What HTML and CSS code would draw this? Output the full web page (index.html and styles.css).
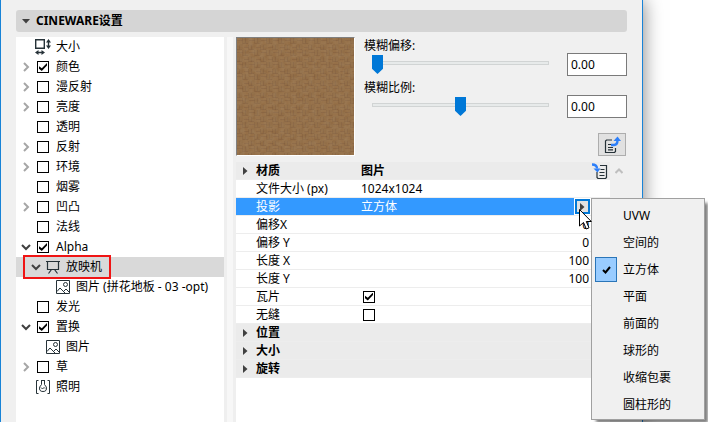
FILE: index.html
```
<!DOCTYPE html>
<html lang="zh-CN">
<head>
    <meta charset="UTF-8">
    <meta name="viewport" content="width=device-width, initial-scale=1.0">
    <title>CINEWARE设置</title>
    <link rel="stylesheet" href="styles.css">
</head>
<body>
    <!-- shared icons -->
    <svg class="defs" width="0" height="0">
        <symbol id="right" viewBox="0 0 8 10"><path d="M2 1 6 5 2 9" fill="none" stroke="#a6a6a6" stroke-width="2"/></symbol>
        <symbol id="down" viewBox="0 0 10 8"><path d="M1 2 5 6 9 2" fill="none" stroke="#404040" stroke-width="2"/></symbol>
        <symbol id="triangle" viewBox="0 0 5 8"><path d="M0 0 4.5 4 0 8Z" fill="#404040"/></symbol>
        <symbol id="picture" viewBox="0 0 14 14">
            <path d="M.5.5h13v13H.5zM1 11.500 4 8l5 5M7.500 11.500 10 9l3 3" fill="none" stroke="#263238"/>
            <circle cx="9.5" cy="4.5" r="2" fill="none" stroke="#263238"/>
        </symbol>
    </svg>

    <main class="dialog">
        <button class="title"><svg width="8" height="5" viewBox="0 0 8 5"><path d="M0 0h8L4 4.5Z" fill="#404040"/></svg>CINEWARE设置</button>

        <div class="panels">
            <ul class="tree">
                <li class="row"><span class="toggle"></span>
                    <svg class="icon size" width="16" height="16" viewBox="0 0 16 16">
                        <path d="M.7.7h8.600v8.600H.7z" fill="none" stroke="#263238" stroke-width="1.400"/>
                        <path d="M13.500 2v6M2 13.500h6" stroke="#263238" stroke-width="1.400"/>
                        <path d="M13.500 0 16 3.500h-5zM13.500 10 16 6.500h-5zM0 13.500 3.500 11v5zM10 13.500 6.500 11v5z" fill="#263238"/>
                    </svg>
                    大小</li>
                <li class="row"><button class="toggle" aria-label="展开"><svg width="8" height="10"><use href="#right"/></svg></button><label><input type="checkbox" checked>颜色</label></li>
                <li class="row"><button class="toggle" aria-label="展开"><svg width="8" height="10"><use href="#right"/></svg></button><label><input type="checkbox">漫反射</label></li>
                <li class="row"><button class="toggle" aria-label="展开"><svg width="8" height="10"><use href="#right"/></svg></button><label><input type="checkbox">亮度</label></li>
                <li class="row"><span class="toggle"></span><label><input type="checkbox">透明</label></li>
                <li class="row"><button class="toggle" aria-label="展开"><svg width="8" height="10"><use href="#right"/></svg></button><label><input type="checkbox">反射</label></li>
                <li class="row"><button class="toggle" aria-label="展开"><svg width="8" height="10"><use href="#right"/></svg></button><label><input type="checkbox">环境</label></li>
                <li class="row"><span class="toggle"></span><label><input type="checkbox">烟雾</label></li>
                <li class="row"><button class="toggle" aria-label="展开"><svg width="8" height="10"><use href="#right"/></svg></button><label><input type="checkbox">凹凸</label></li>
                <li class="row"><span class="toggle"></span><label><input type="checkbox">法线</label></li>
                <li class="row"><button class="toggle" aria-label="折叠"><svg width="10" height="8"><use href="#down"/></svg></button><label><input type="checkbox" checked>Alpha</label></li>
                <li class="row level-1 selected"><button class="toggle" aria-label="折叠"><svg width="10" height="8"><use href="#down"/></svg></button>
                    <svg class="icon" width="14" height="14" viewBox="0 0 14 14"><path d="M0 1.500h14M1.500 1.500v8h11v-8M5.500 9.500 2.500 13.500M8.500 9.500l3 4" fill="none" stroke="#263238" stroke-width="1.200"/></svg>
                    放映机
                    <span class="highlight"></span></li>
                <li class="row level-2"><span class="toggle"></span><svg class="icon" width="14" height="14"><use href="#picture"/></svg>图片 (拼花地板 - 03 -opt)</li>
                <li class="row"><span class="toggle"></span><label><input type="checkbox">发光</label></li>
                <li class="row"><button class="toggle" aria-label="折叠"><svg width="10" height="8"><use href="#down"/></svg></button><label><input type="checkbox" checked>置换</label></li>
                <li class="row level-1"><span class="toggle"></span><svg class="icon" width="14" height="14"><use href="#picture"/></svg>图片</li>
                <li class="row"><button class="toggle" aria-label="展开"><svg width="8" height="10"><use href="#right"/></svg></button><label><input type="checkbox">草</label></li>
                <li class="row"><span class="toggle"></span>
                    <svg class="icon" width="14" height="14" viewBox="0 0 14 14">
                        <path d="M2.500.5h-2v13h2M11.500.5h2v13h-2M5 .5h4M5.500.5v4L3.700 7q-1 4.500 3.300 4.500T10.300 7L8.500 4.500v-4M5 7.500 6.500 9 8 7.500l1 1" fill="none" stroke="#263238"/>
                    </svg>
                    照明</li>
            </ul>

            <div class="splitter"></div>

            <section class="details">
                <div class="top">
                    <svg class="preview" viewBox="0 0 117 117" preserveAspectRatio="xMidYMid slice">
                        <defs>
                            <pattern id="weave" width="12" height="12" patternUnits="userSpaceOnUse">
                                <path d="M0 0h12v12H0z" fill="#956f47"/>
                                <path d="M6 0h6v6H6zM0 6h6v6H0z" fill="#916c45"/>
                                <path d="M0 2.500h6M7 9.500h5M8.500 0v5M2.500 7v5" stroke="#846140" opacity=".6"/>
                                <path d="M5.500 0v6M11.500 7v5M6 5.500h5M0 11.500h5" stroke="#7d5b3a" opacity=".45"/>
                            </pattern>
                            <filter id="grain" x="0" y="0" width="100%" height="100%">
                                <feTurbulence type="fractalNoise" baseFrequency=".25" numOctaves="2" seed="4"/>
                                <feColorMatrix values="0 0 0 0 .4  0 0 0 0 .29  0 0 0 0 .17  1 0 0 0 -.25"/>
                            </filter>
                        </defs>
                        <rect width="117" height="117" fill="url(#weave)"/>
                        <rect width="117" height="117" filter="url(#grain)" opacity=".5"/>
                    </svg>
                    <div class="controls">
                        <div class="control">
                            <div class="slider">
                                <label for="blurOffset">模糊偏移:</label>
                                <input type="range" id="blurOffset" min="0" max="100" value="0">
                            </div>
                            <input type="text" value="0.00" aria-label="模糊偏移">
                        </div>
                        <div class="control">
                            <div class="slider">
                                <label for="blurScale">模糊比例:</label>
                                <input type="range" id="blurScale" min="-100" max="100" value="0">
                            </div>
                            <input type="text" value="0.00" aria-label="模糊比例">
                        </div>
                        <button class="export" aria-label="导出">
                            <svg width="17" height="17" viewBox="0 0 17 17">
                                <path d="M8 4H2.500L1.500 5v11.500h9l1-1V12M4 8.500h3.500M4 11.500h5M4 13.800h5" fill="none" stroke="#263238" stroke-width="1.200"/>
                                <path d="M7 9h3q3.500 0 3.500-5" fill="none" stroke="#2d7ff9" stroke-width="2.400"/>
                                <path d="M9.500 5 13.500.5 17 5z" fill="#2d7ff9"/>
                            </svg>
                        </button>
                    </div>
                </div>

                <div class="list">
                    <table>
                        <colgroup><col class="col-arrow"><col class="col-name"><col><col class="col-action"></colgroup>
                        <tr class="group">
                            <td><svg width="5" height="8"><use href="#triangle"/></svg></td>
                            <th>材质</th>
                            <th>图片</th>
                            <td><button class="import" aria-label="导入">
                                <svg width="16" height="16" viewBox="0 0 16 16">
                                    <path d="M8 2.500h6.500v12l-1 1H6l-1-1V9M8.500 6.500h4M7.500 9.500h5M7.500 12.500h5" fill="none" stroke="#263238" stroke-width="1.200"/>
                                    <path d="M0 1.500q5 0 5 4" fill="none" stroke="#2d7ff9" stroke-width="2.400"/>
                                    <path d="M1.500 5.500h7L5.500 9.500z" fill="#2d7ff9"/>
                                </svg>
                            </button></td>
                        </tr>
                        <tr><td></td><td>文件大小 (px)</td><td colspan="2">1024x1024</td></tr>
                        <tr class="active"><td></td><td>投影</td><td>立方体</td>
                            <td class="action">
                                <div class="dropdown">
                                    <button class="open" aria-label="投影"><svg width="5" height="8"><use href="#triangle"/></svg></button>
                                    <ul class="menu">
                                        <li><button><span class="mark"></span>UVW</button></li>
                                        <li><button><span class="mark"></span>空间的</button></li>
                                        <li><button><span class="mark checked"><svg width="9" height="8" viewBox="0 0 9 8"><path d="M1 4 3.500 6.500 8 1" fill="none" stroke="#000" stroke-width="2"/></svg></span>立方体</button></li>
                                        <li><button><span class="mark"></span>平面</button></li>
                                        <li><button><span class="mark"></span>前面的</button></li>
                                        <li><button><span class="mark"></span>球形的</button></li>
                                        <li><button><span class="mark"></span>收缩包裹</button></li>
                                        <li><button><span class="mark"></span>圆柱形的</button></li>
                                    </ul>
                                    <svg class="pointer" width="13" height="21" viewBox="0 0 13 21"><path d="M.5.5v16.500l4-3.500 2.800 6.500 2.700-1.200-2.700-6.300h5z" fill="#fff" stroke="#000"/></svg>
                                </div>
                            </td>
                        </tr>
                        <tr><td></td><td>偏移X</td><td class="number" colspan="2">0</td></tr>
                        <tr><td></td><td>偏移 Y</td><td class="number" colspan="2">0</td></tr>
                        <tr><td></td><td>长度 X</td><td class="number" colspan="2">100</td></tr>
                        <tr><td></td><td>长度 Y</td><td class="number" colspan="2">100</td></tr>
                        <tr><td></td><td><label for="tile">瓦片</label></td><td class="check" colspan="2"><input type="checkbox" id="tile" checked></td></tr>
                        <tr><td></td><td><label for="seamless">无缝</label></td><td class="check" colspan="2"><input type="checkbox" id="seamless"></td></tr>
                        <tr class="group"><td><svg width="5" height="8"><use href="#triangle"/></svg></td><th colspan="3">位置</th></tr>
                        <tr class="group"><td><svg width="5" height="8"><use href="#triangle"/></svg></td><th colspan="3">大小</th></tr>
                        <tr class="group"><td><svg width="5" height="8"><use href="#triangle"/></svg></td><th colspan="3">旋转</th></tr>
                    </table>
                    <div class="scrollbar">
                        <button aria-label="向上滚动"><svg width="8" height="6" viewBox="0 0 8 6"><path d="M.5 5 4 1.500 7.500 5" fill="none" stroke="#bfbfbf" stroke-width="2"/></svg></button>
                    </div>
                </div>
            </section>
        </div>
    </main>
</body>
</html>
```
FILE: styles.css
```
* {
    box-sizing: border-box;
}
body {
    margin: 0;
    background: #fff;
    color: #000;
    font-family: "Noto Sans", "Noto Sans CJK SC", sans-serif;
    font-size: 12px;
    line-height: 16px;
    overflow: hidden;
}
button, input {
    font: inherit;
    color: inherit;
    margin: 0;
}
button {
    padding: 0;
    border: none;
    background: none;
}
svg {
    display: block;
    flex: none;
}
ul {
    list-style: none;
    margin: 0;
    padding: 0;
}
.defs {
    position: absolute;
}
.dialog {
    display: flex;
    flex-direction: column;
    height: 100vh;
    margin-right: 65px;
    padding: 10px 15px 0;
    border: solid #1883d7;
    border-width: 0 1px;
    background: #f0f0f0;
    box-shadow: 0 0 18px rgba(0, 0, 0, 0.5);
}
.title {
    display: flex;
    align-items: center;
    gap: 6px;
    height: 22px;
    padding: 0 6px;
    border-radius: 3px;
    background: #d5d5d5;
    font-weight: bold;
}
.panels {
    display: flex;
    flex: 1;
    min-height: 0;
    margin-top: 5px;
}

/* channel tree */
.tree {
    width: 208px;
    background: #fff;
    white-space: nowrap;
}
.row {
    display: flex;
    align-items: center;
    position: relative;
    height: 20px;
    padding-left: 5px;
}
.row label {
    display: flex;
    align-items: center;
}
.row input {
    margin: 0 7px 0 1px;
}
.level-1 {
    padding-left: 15px;
}
.level-2 {
    padding-left: 25px;
}
.selected {
    background: #d9d9d9;
}
.toggle {
    display: flex;
    justify-content: center;
    width: 10px;
    margin-right: 5px;
}
.icon {
    margin-right: 6px;
}
.icon.size {
    margin: 0 5px 0 -1px;
}
.highlight {
    position: absolute;
    left: 7px;
    top: -2px;
    width: 88px;
    height: 24px;
    border: 2px solid #f01414;
}
.splitter {
    width: 12px;
    border: solid #efefef;
    border-width: 0 3px;
    background: #f7f7f7;
}
input[type="checkbox"] {
    appearance: none;
    display: grid;
    place-items: center;
    width: 12px;
    height: 12px;
    border: 1px solid #000;
    background: #fff;
}
input[type="checkbox"]:checked::after {
    content: "";
    width: 8px;
    height: 8px;
    background: #000;
    clip-path: polygon(0 40%, 35% 65%, 100% 0, 100% 32%, 35% 100%, 0 72%);
}

/* preview and sliders */
.details {
    display: flex;
    flex-direction: column;
    flex: 1;
    min-width: 0;
}
.top {
    display: flex;
    gap: 9px;
}
.preview {
    width: 119px;
    height: 119px;
    border: 1px solid;
    border-color: #808080 #fff #fff #808080;
}
.controls {
    display: flex;
    flex-direction: column;
    flex: 1;
    gap: 4px;
    min-width: 0;
    padding-top: 1px;
}
.control {
    display: flex;
    align-items: flex-end;
    gap: 18px;
}
.slider {
    display: flex;
    flex-direction: column;
    flex: 1;
    min-width: 0;
    height: 38px;
}
input[type="range"] {
    appearance: none;
    height: 18px;
    margin-left: 8px;
    background: none;
}
input[type="range"]::-webkit-slider-runnable-track {
    height: 4px;
    background: #e7eaea;
    box-shadow: inset 0 0 0 1px #d1d4d4;
}
input[type="range"]::-webkit-slider-thumb {
    appearance: none;
    width: 11px;
    height: 19px;
    margin-top: -6px;
    background: #0078d7;
    clip-path: polygon(0 0, 100% 0, 100% 72%, 50% 100%, 0 72%);
}
input[type="text"] {
    width: 60px;
    height: 23px;
    padding: 0 3px;
    border: 1px solid #7a7a7a;
    background: #fff;
}
.export {
    display: grid;
    place-items: center;
    align-self: flex-end;
    width: 28px;
    height: 23px;
    margin: auto 1px 0 0;
    border: 1px solid #adadad;
    background: #e1e1e1;
}

/* property list */
.list {
    display: flex;
    align-items: flex-start;
    flex: 1;
    margin-top: 6px;
    background: #fff;
}
table {
    flex: 1;
    table-layout: fixed;
    width: 100%;
    border-collapse: separate;
    border-spacing: 0;
}
.col-arrow {
    width: 20px;
}
.col-name {
    width: 105px;
}
.col-action {
    width: 36px;
}
td, th {
    height: 18px;
    padding: 0;
    border-bottom: 1px solid #ededed;
    line-height: 17px;
    text-align: left;
    white-space: nowrap;
}
td:first-child svg {
    margin-left: 7px;
}
.group td, .group th {
    background: #ebebeb;
}
.active td {
    background: #3399ff;
    color: #fff;
}
.active .action {
    background: #fff;
    color: #000;
}
.number {
    padding-right: 21px;
    text-align: right;
}
.check input {
    margin-left: 2px;
}
.import {
    display: block;
    margin-left: 18px;
}
.dropdown {
    position: relative;
    width: 15px;
    margin-left: 1px;
}
.open {
    display: grid;
    place-items: center;
    width: 15px;
    height: 15px;
    border: 2px solid #0078d7;
    background: #e1e1e1;
}
.menu {
    position: absolute;
    left: 16px;
    top: -1px;
    width: 114px;
    padding: 3px 3px 1px;
    border: 1px solid #a0a0a0;
    background: #f0f0f0;
    box-shadow: 4px 4px 3px -1px rgba(0, 0, 0, 0.5);
}
.menu button {
    display: flex;
    align-items: center;
    gap: 6px;
    width: 100%;
    height: 27px;
}
.mark {
    display: grid;
    place-items: center;
    width: 22px;
    height: 25px;
}
.checked {
    border: 1px solid #2a75b8;
    background: #99ccff;
}
.pointer {
    position: absolute;
    left: 4px;
    top: 10px;
}
.scrollbar {
    align-self: stretch;
    width: 17px;
    background: #f0f0f0;
}
.scrollbar button {
    display: grid;
    place-items: center;
    width: 17px;
    height: 18px;
}
```
